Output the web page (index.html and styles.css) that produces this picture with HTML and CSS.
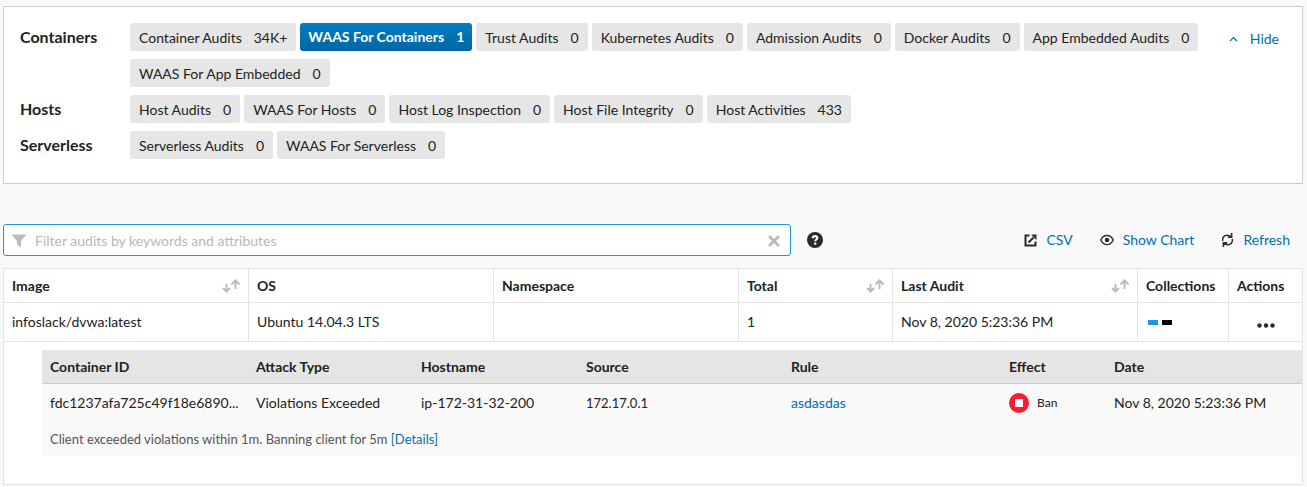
FILE: index.html
```
<!DOCTYPE html>
<html lang="en">
<head>
<meta charset="utf-8">
<title>Audits</title>
<link rel="stylesheet" href="styles.css">
</head>
<body>
<svg class="defs" aria-hidden="true">
  <symbol id="sort" viewBox="0 0 18 14">
    <path d="M4.500 5v7M1 9l3.500 3.500L8 9M13.500 10V2M9.500 5.500l4-4 4 4" fill="none" stroke="currentColor" stroke-width="2"/>
  </symbol>
</svg>

<section class="panel">
  <div class="groups">
    <h2 class="group-name">Containers</h2>
    <div class="pills">
      <button class="pill">Container Audits <span>34K+</span></button>
      <button class="pill active">WAAS For Containers <span>1</span></button>
      <button class="pill">Trust Audits <span>0</span></button>
      <button class="pill">Kubernetes Audits <span>0</span></button>
      <button class="pill">Admission Audits <span>0</span></button>
      <button class="pill">Docker Audits <span>0</span></button>
      <button class="pill">App Embedded Audits <span>0</span></button>
      <button class="pill">WAAS For App Embedded <span>0</span></button>
    </div>
    <h2 class="group-name">Hosts</h2>
    <div class="pills">
      <button class="pill">Host Audits <span>0</span></button>
      <button class="pill">WAAS For Hosts <span>0</span></button>
      <button class="pill">Host Log Inspection <span>0</span></button>
      <button class="pill">Host File Integrity <span>0</span></button>
      <button class="pill">Host Activities <span>433</span></button>
    </div>
    <h2 class="group-name">Serverless</h2>
    <div class="pills">
      <button class="pill">Serverless Audits <span>0</span></button>
      <button class="pill">WAAS For Serverless <span>0</span></button>
    </div>
  </div>
  <button class="action hide">
    <svg width="9" height="6" viewBox="0 0 9 6"><path d="M1 5l3.500-3.500L8 5" fill="none" stroke="currentColor" stroke-width="1.200"/></svg>
    Hide
  </button>
</section>

<div class="toolbar">
  <div class="search">
    <svg class="muted" width="14" height="14" viewBox="0 0 14 14"><path d="M.3.500h13.400v1L9 7v6.500L5 10.500V7L.3 1.500z" fill="currentColor"/></svg>
    <input type="text" aria-label="Filter audits" placeholder="Filter audits by keywords and attributes">
    <button class="icon-button muted" aria-label="Clear filter">
      <svg width="12" height="12" viewBox="0 0 12 12"><path d="M2 2l8 8M10 2l-8 8" stroke="currentColor" stroke-width="3" stroke-linecap="round"/></svg>
    </button>
  </div>
  <button class="icon-button" aria-label="Help">
    <svg width="16" height="16" viewBox="0 0 16 16"><circle cx="8" cy="8" r="8" fill="currentColor"/><path d="M5.700 6.200C5.800 4.800 6.700 4.100 8 4.100s2.300.8 2.300 1.900C10.300 7.500 8.200 7.500 8.200 9.300" fill="none" stroke="#fff" stroke-width="2.100"/><path d="M7.100 10.500h2.200v2.200H7.100z" fill="#fff"/></svg>
  </button>
  <div class="actions">
    <button class="action">
      <svg width="13" height="13" viewBox="0 0 13 13"><path d="M5.500 1.500H1.500v10h10V7.500" fill="none" stroke="currentColor" stroke-width="2"/><path d="M4.500 8.500l5-5" stroke="currentColor" stroke-width="2"/><path d="M7 .5h5.500V6z" fill="currentColor"/></svg>
      CSV
    </button>
    <button class="action">
      <svg width="14" height="12" viewBox="0 0 14 12"><path d="M.8 6C3.500-.1 10.500-.1 13.200 6 10.500 12.100 3.500 12.100.8 6z" fill="none" stroke="currentColor" stroke-width="1.400"/><circle cx="7" cy="6" r="2.200" fill="currentColor"/></svg>
      Show Chart
    </button>
    <button class="action">
      <svg width="13" height="16" viewBox="0 0 13 16"><path d="M1.700 9C.9 5.500 3.500 3.300 6 3.300c1.500 0 3 .5 4.200 1.500M10.600 1v4.200H6.800M11.300 7c.8 3.500-1.800 5.700-4.300 5.700-1.500 0-3-.5-4.200-1.500M2.400 15v-4.200h3.800" fill="none" stroke="currentColor" stroke-width="1.600"/></svg>
      Refresh
    </button>
  </div>
</div>

<table class="audits">
  <colgroup><col class="c-first"><col class="c-wide"><col class="c-wide"><col class="c-total"><col class="c-wide"><col class="c-coll"><col class="c-act"></colgroup>
  <thead>
    <tr>
      <th><div class="head">Image <svg class="muted" width="18" height="14"><use href="#sort"/></svg></div></th>
      <th>OS</th>
      <th>Namespace</th>
      <th><div class="head">Total <svg class="muted" width="18" height="14"><use href="#sort"/></svg></div></th>
      <th><div class="head">Last Audit <svg class="muted" width="18" height="14"><use href="#sort"/></svg></div></th>
      <th>Collections</th>
      <th>Actions</th>
    </tr>
  </thead>
  <tbody>
    <tr>
      <td>infoslack/dvwa:latest</td>
      <td>Ubuntu 14.04.3 LTS</td>
      <td></td>
      <td>1</td>
      <td>Nov 8, 2020 5:23:36 PM</td>
      <td><div class="tags"><i class="tag blue"></i><i class="tag black"></i></div></td>
      <td class="more">
        <button class="icon-button" aria-label="Row actions"><svg width="18" height="6" viewBox="0 0 18 6"><circle cx="2.500" cy="3.500" r="2.200" fill="currentColor"/><circle cx="9" cy="3.500" r="2.200" fill="currentColor"/><circle cx="15.500" cy="3.500" r="2.200" fill="currentColor"/></svg></button>
      </td>
    </tr>
    <tr>
      <td colspan="7" class="nest">
        <table class="details">
          <colgroup><col class="d-id"><col class="d-mid"><col class="d-mid"><col class="d-source"><col class="d-rule"><col class="d-effect"><col></colgroup>
          <thead>
            <tr><th>Container ID</th><th>Attack Type</th><th>Hostname</th><th>Source</th><th>Rule</th><th>Effect</th><th>Date</th></tr>
          </thead>
          <tbody>
            <tr>
              <td>fdc1237afa725c49f18e6890...</td>
              <td>Violations Exceeded</td>
              <td>ip-172-31-32-200</td>
              <td class="small">172.17.0.1</td>
              <td><a href="#rule">asdasdas</a></td>
              <td><div class="effect"><svg width="20" height="20" viewBox="0 0 20 20"><circle cx="10" cy="10" r="10" fill="#f91c2f"/><path d="M6 6h8v8H6z" fill="#fff"/></svg>Ban</div></td>
              <td>Nov 8, 2020 5:23:36 PM</td>
            </tr>
            <tr><td colspan="7" class="message">Client exceeded violations within 1m. Banning client for 5m <a href="#details">[Details]</a></td></tr>
          </tbody>
        </table>
      </td>
    </tr>
  </tbody>
</table>
</body>
</html>
```
FILE: styles.css
```
* { box-sizing: border-box; }

body {
  margin: 0;
  padding: 6px 4px 0 3px;
  background: #f9f9f9;
  color: #222;
  font: 14px/20px Lato, "Liberation Sans", sans-serif;
}

button, input { font: inherit; color: inherit; }
button { padding: 0; border: 0; background: none; cursor: pointer; }
a { color: #006fad; text-decoration: none; }
svg { flex: none; display: block; }
.defs { display: none; }
.muted { color: #bbb; }
.icon-button { flex: none; color: #2b2b2b; }
.icon-button.muted { color: #bbb; }

.panel {
  display: flex;
  align-items: flex-start;
  padding: 16px 23px 24px 16px;
  border: 1px solid #ccc;
  background: #fff;
}
.groups {
  flex: 1;
  display: grid;
  grid-template-columns: 110px 1fr;
  row-gap: 8px;
}
.group-name { margin: 0; font-size: 16px; line-height: 28px; font-weight: 700; }
.pills { display: flex; flex-wrap: wrap; gap: 8px 4px; }
.pill {
  display: flex;
  gap: 12px;
  height: 28px;
  padding: 1px 9px 0;
  align-items: center;
  border-radius: 3px;
  background: #e6e6e6;
  white-space: nowrap;
}
.pill.active {
  padding: 0 8px;
  background: linear-gradient(#007dc3, #0066a3);
  color: #fff;
  font-weight: 700;
}

.action {
  display: flex;
  align-items: center;
  gap: 9px;
  color: #006fad;
  white-space: nowrap;
}
.hide { gap: 12px; padding-top: 6px; }

.toolbar { display: flex; align-items: center; margin: 40px 0 12px; }
.search {
  flex: none;
  width: 60.6%;
  height: 32px;
  display: flex;
  align-items: center;
  gap: 9px;
  padding: 2px 10px 0 8px;
  margin-right: 16px;
  border: 1px solid #1f95e0;
  border-radius: 3px;
  background: #fff;
}
.search input { flex: 1; min-width: 0; padding: 0; border: 0; outline: 0; background: none; }
.search input::placeholder { color: #b8b8b8; opacity: 1; }
.actions { display: flex; gap: 27px; margin-left: auto; padding-right: 13px; }
.actions svg { color: #2b2b2b; }

table { width: 100%; table-layout: fixed; border-collapse: separate; border-spacing: 0; }
th, td {
  padding: 0 8px;
  text-align: left;
  overflow: hidden;
  white-space: nowrap;
  text-overflow: ellipsis;
}
th { font-weight: 700; }

.audits { border: 1px solid #e4e4e4; background: #fff; }
.audits > thead th, .audits > tbody > tr > td { border-bottom: 1px solid #e4e4e4; }
.audits > thead th + th, .audits > tbody > tr > td + td { border-left: 1px solid #e4e4e4; }
.audits > thead th { height: 34px; }
.audits > tbody > tr > td { height: 39px; }
.c-first { width: 244px; }
.c-wide { width: 245px; }
.c-total { width: 154px; }
.c-coll { width: 91px; }
.c-act { width: 74px; }
.head { display: flex; justify-content: space-between; align-items: center; }
.tags { display: flex; gap: 4px; padding-left: 2px; }
.tag { width: 10px; height: 5px; }
.blue { background: #1896f0; }
.black { background: #000; }
.audits > tbody > tr > td.more { padding-top: 3px; text-align: center; }
.more .icon-button { vertical-align: middle; }

.audits > tbody > tr > td.nest { padding: 8px 0 28px 38px; border-bottom: 0; }
.details { background: #f9f9f9; }
.details th { height: 34px; background: #e5e5e5; border-bottom: 1px solid #ccc; }
.details td { height: 38px; }
.details td.message { height: 34px; padding-bottom: 1px; color: #555; }
.small, .message { font-size: 13px; }
.d-id { width: 206px; }
.d-mid { width: 165px; }
.d-source { width: 205px; }
.d-rule { width: 218px; }
.d-effect { width: 105px; }
.effect { display: flex; align-items: center; gap: 8px; font-size: 12px; }
```
